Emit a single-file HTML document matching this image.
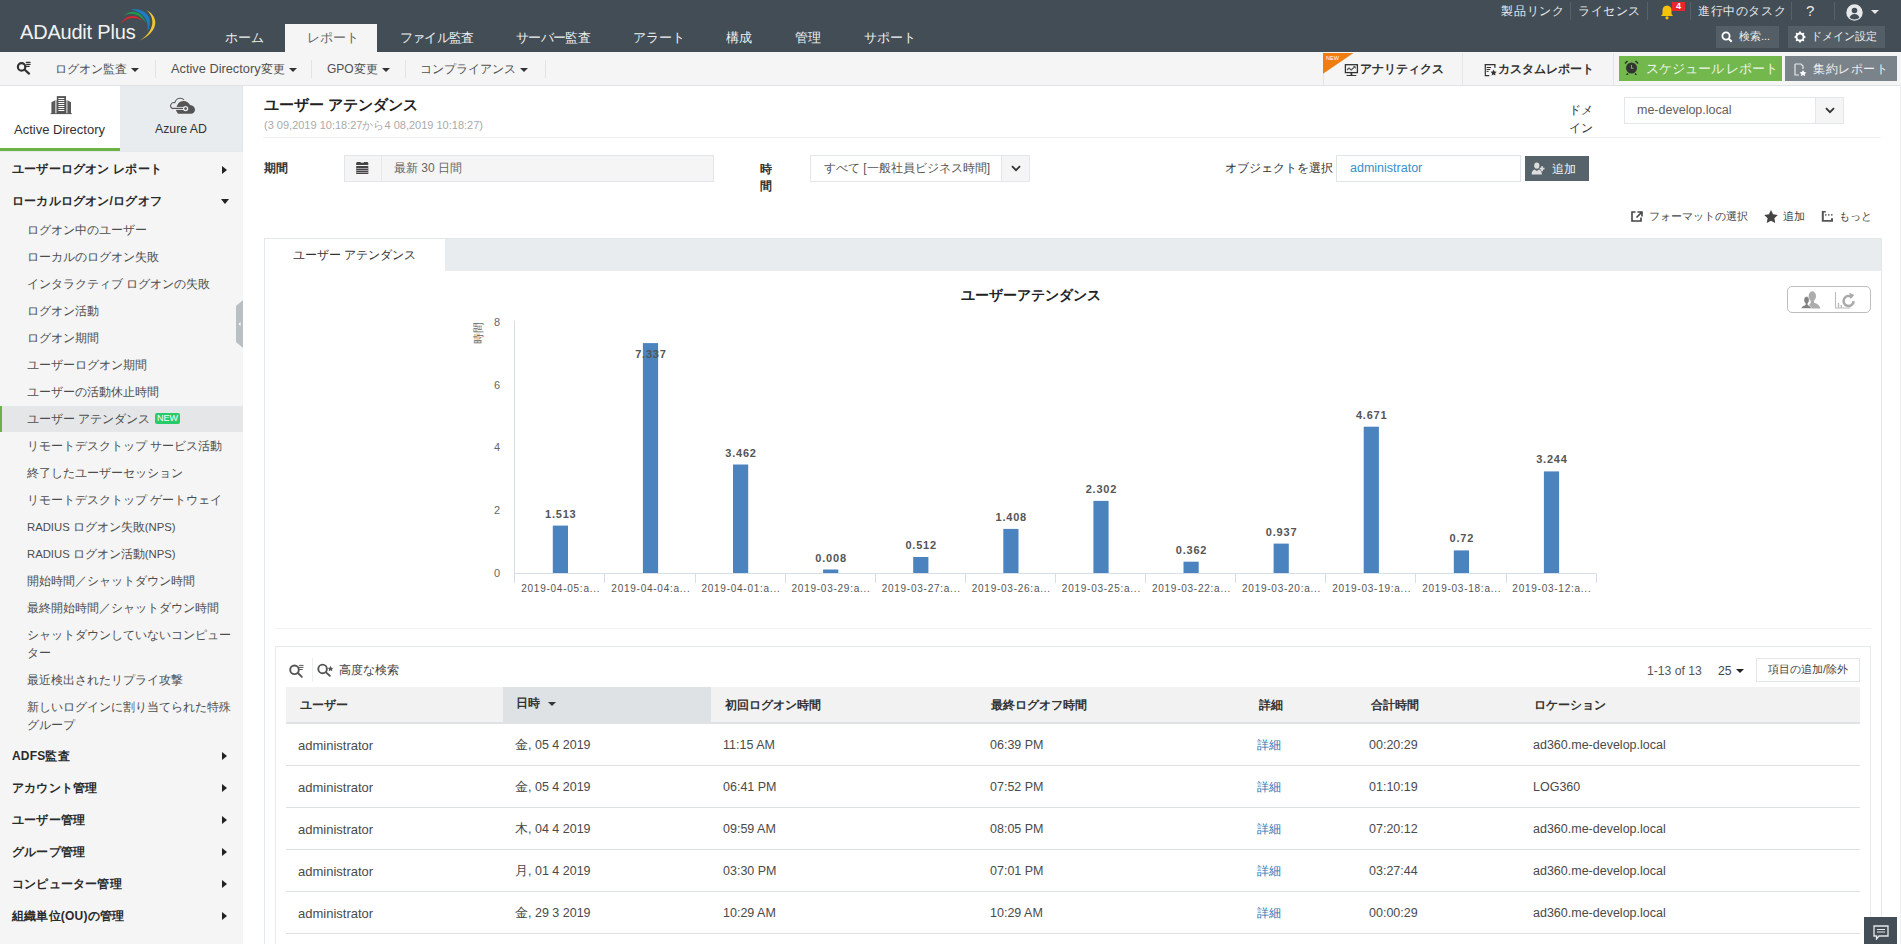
<!DOCTYPE html>
<html><head><meta charset="utf-8">
<style>
*{box-sizing:border-box;margin:0;padding:0}
html,body{width:1901px;height:944px;overflow:hidden;background:#fff;font-family:"Liberation Sans",sans-serif;color:#333}
.a{position:absolute;white-space:nowrap;line-height:1}
#top{position:absolute;left:0;top:0;width:1901px;height:52px;background:#424d55}
.nav{color:#eef0f1;font-size:12.5px;top:32px}
.tr{color:#e8eaeb;font-size:12px;top:5px}
.sep{position:absolute;width:1px;background:#56616a}
#sub{position:absolute;left:0;top:52px;width:1901px;height:34px;background:#f5f5f5;border-bottom:1px solid #dfe3e5}
.sb{font-size:12px;color:#505050;top:63px}
.caret{display:inline-block;width:0;height:0;border-left:4px solid transparent;border-right:4px solid transparent;border-top:4px solid #333;vertical-align:middle;margin-left:4px}
#side{position:absolute;left:0;top:86px;width:243px;height:858px;background:#f5f5f5}
.si{font-size:12px;color:#4d4d4d;left:27px}
.sh{font-size:12px;color:#2a2a2a;font-weight:bold;left:12px;letter-spacing:0.2px}
.ra{position:absolute;left:222px;width:0;height:0;border-top:4px solid transparent;border-bottom:4px solid transparent;border-left:5px solid #222}
.da{position:absolute;left:221px;width:0;height:0;border-left:4.5px solid transparent;border-right:4.5px solid transparent;border-top:5px solid #222}
</style></head><body>
<div id="top">
  <div class="a" style="left:20px;top:22px;font-size:20px;color:#f2f2f2;letter-spacing:-0.2px">ADAudit Plus</div>
  <svg class="a" style="left:110px;top:0" width="50" height="50" viewBox="110 0 50 50">
    <path d="M146 10C158 15 161 31 139 41C156 31 155 16 146 10Z" fill="#f2c530"/>
    <path d="M131 9.5C144 8 155 16 147.5 32C149.5 19 142 12 131 9.5Z" fill="#1d7dc2"/>
    <path d="M123 16C130 9.5 141 9 146.5 23.5C139 13 130 12 123 16Z" fill="#1f9a4e"/>
    <path d="M120.6 24C125 15 136 13 142.8 21C136 16 126 17 120.6 24Z" fill="#d8272e"/>
  </svg>
  <div class="a nav" style="left:225px">ホーム</div>
  <div class="a" style="left:285px;top:24px;width:92px;height:28px;background:#f5f5f5"></div>
  <div class="a nav" style="left:307px;color:#666">レポート</div>
  <div class="a nav" style="left:400px;letter-spacing:-0.8px">ファイル監査</div>
  <div class="a nav" style="left:516px;letter-spacing:-0.7px">サーバー監査</div>
  <div class="a nav" style="left:633px">アラート</div>
  <div class="a nav" style="left:726px">構成</div>
  <div class="a nav" style="left:795px">管理</div>
  <div class="a nav" style="left:864px">サポート</div>

  <div class="a tr" style="left:1501px;letter-spacing:0.8px">製品リンク</div>
  <div class="sep" style="left:1570px;top:2px;height:18px"></div>
  <div class="a tr" style="left:1578px;letter-spacing:0.6px">ライセンス</div>
  <div class="sep" style="left:1647px;top:2px;height:18px"></div>
  <svg class="a" style="left:1659px;top:4px" width="16" height="16" viewBox="0 0 16 16"><path d="M8 1.5c-3 0-4.5 2.2-4.5 5v3.5L2 12h12l-1.5-2V6.5c0-2.8-1.5-5-4.5-5z" fill="#f4c20d"/><circle cx="8" cy="13.8" r="1.6" fill="#f4c20d"/></svg>
  <div class="a" style="left:1672px;top:2px;width:13px;height:9px;background:#e8262b;color:#fff;font-size:9px;font-weight:bold;text-align:center;line-height:9px">4</div>
  <div class="sep" style="left:1690px;top:2px;height:18px"></div>
  <div class="a tr" style="left:1698px;letter-spacing:0.6px">進行中のタスク</div>
  <div class="sep" style="left:1791px;top:2px;height:18px"></div>
  <div class="a tr" style="left:1806px;top:3px;font-size:15px">?</div>
  <div class="sep" style="left:1834px;top:2px;height:18px"></div>
  <svg class="a" style="left:1846px;top:4px" width="17" height="17" viewBox="0 0 17 17"><circle cx="8.5" cy="8.5" r="8.2" fill="#e6e8e9"/><circle cx="8.5" cy="6.5" r="2.8" fill="#424d55"/><path d="M3.5 13.5c1-2.5 3-3.5 5-3.5s4 1 5 3.5c-1.3 1.3-3 2-5 2s-3.7-.7-5-2z" fill="#424d55"/></svg>
  <div class="a" style="left:1871px;top:10px;width:0;height:0;border-left:4px solid transparent;border-right:4px solid transparent;border-top:4px solid #e6e8e9"></div>

  <div class="a" style="left:1716px;top:26px;width:63px;height:22px;background:#535e66"></div>
  <svg class="a" style="left:1721px;top:31px" width="12" height="12" viewBox="0 0 12 12"><circle cx="5" cy="5" r="3.6" stroke="#fff" stroke-width="1.8" fill="none"/><path d="M7.5 7.5l3.2 3.2" stroke="#fff" stroke-width="2"/></svg>
  <div class="a" style="left:1739px;top:31px;font-size:11px;color:#f0f0f0">検索...</div>
  <div class="a" style="left:1788px;top:26px;width:97px;height:22px;background:#535e66"></div>
  <svg class="a" style="left:1794px;top:31px" width="12" height="12" viewBox="0 0 12 12"><circle cx="6" cy="6" r="3.6" stroke="#fff" stroke-width="2" fill="none"/><path d="M6 .6v2M6 9.4v2M.6 6h2M9.4 6h2M2.2 2.2l1.4 1.4M8.4 8.4l1.4 1.4M2.2 9.8l1.4-1.4M8.4 3.6l1.4-1.4" stroke="#fff" stroke-width="1.8"/></svg>
  <div class="a" style="left:1811px;top:31px;font-size:11px;color:#f0f0f0">ドメイン設定</div>
</div>

<div id="sub">
</div>
<svg class="a" style="left:10px;top:56px" width="30" height="24" viewBox="10 56 30 24"><circle cx="21.6" cy="66.9" r="3.7" stroke="#333" stroke-width="2.2" fill="none"/><path d="M25 70l4 3.6" stroke="#333" stroke-width="2.3" stroke-linecap="round"/><path d="M26.3 62.4h3.8M26.6 64.4h3.5M26.2 66.4h3" stroke="#333" stroke-width="1.1" stroke-linecap="round"/></svg>
<div class="a sb" style="left:55px">ログオン監査<span class="caret"></span></div>
<div class="sep" style="left:155px;top:60px;height:18px;background:#e3e3e3"></div>
<div class="a sb" style="left:171px"><span style="font-size:12.8px">Active Directory</span>変更<span class="caret"></span></div>
<div class="sep" style="left:311px;top:60px;height:18px;background:#e3e3e3"></div>
<div class="a sb" style="left:327px">GPO変更<span class="caret"></span></div>
<div class="sep" style="left:405px;top:60px;height:18px;background:#e3e3e3"></div>
<div class="a sb" style="left:420px">コンプライアンス<span class="caret"></span></div>
<div class="sep" style="left:545px;top:60px;height:18px;background:#e3e3e3"></div>

<div class="sep" style="left:1323px;top:53px;height:32px;background:#e3e6e8"></div>
<svg class="a" style="left:1323px;top:53px" width="31" height="21" viewBox="0 0 31 21"><path d="M0 0H30.5L0 20.8z" fill="#f07d12"/><text x="3" y="7" font-family="Liberation Sans" font-size="5.5" fill="#fff">NEW</text></svg>
<svg class="a" style="left:1344px;top:63px" width="15" height="14" viewBox="0 0 15 14"><rect x="1.4" y="1.7" width="12" height="7.9" stroke="#333" stroke-width="1.3" fill="none"/><path d="M3 7l2-2 2.2 2 3.3-3" stroke="#555" stroke-width="1.2" fill="none"/><path d="M9 3.2h2.6v2.6z" fill="#444"/><rect x="6.6" y="9.6" width="1.7" height="2.4" fill="#333"/><rect x="2.4" y="11.9" width="10" height="1.2" rx=".6" fill="#333"/></svg>
<div class="a" style="left:1360px;top:63px;font-size:12px;font-weight:bold;color:#333">アナリティクス</div>
<div class="sep" style="left:1462px;top:53px;height:32px;background:#e3e6e8"></div>
<svg class="a" style="left:1484px;top:63px" width="14" height="14" viewBox="0 0 14 14"><path d="M0.7 1.6h10.2v3.2" stroke="#333" stroke-width="1.3" fill="none"/><path d="M1.3 1.6v11.1h4" stroke="#333" stroke-width="1.2" fill="none"/><path d="M2.6 4.5h4.4M2.6 6.5h3.6M2.6 8.4h2" stroke="#333" stroke-width="1"/><path d="M9.6 6.6l.95 1.9 2.1.3-1.5 1.5.35 2.1-1.9-1-1.9 1 .35-2.1-1.5-1.5 2.1-.3z" fill="#333"/></svg>
<div class="a" style="left:1498px;top:63px;font-size:12px;font-weight:bold;color:#333">カスタムレポート</div>
<div class="sep" style="left:1613px;top:53px;height:32px;background:#e3e6e8"></div>
<div class="a" style="left:1619px;top:56px;width:163px;height:25px;background:#73b84d"></div>
<svg class="a" style="left:1624px;top:60px" width="15" height="15" viewBox="0 0 15 15"><circle cx="7.5" cy="8" r="5.5" fill="#333"/><path d="M1 3.5l2.5-2.5M14 3.5L11.5 1M4 13.5l-1.5 1.5M11 13.5l1.5 1.5" stroke="#333" stroke-width="1.6"/><path d="M7.5 5v3.2h2" stroke="#73b84d" stroke-width="1.1" fill="none"/></svg>
<div class="a" style="left:1646px;top:62.5px;font-size:12.6px;color:#eef5ea">スケジュール<span style="margin-left:1.5px"></span>レポート</div>
<div class="a" style="left:1785px;top:56px;width:112px;height:25px;background:#7b838a"></div>
<svg class="a" style="left:1794px;top:63px" width="13" height="13" viewBox="0 0 13 13"><path d="M1 1h6l2 2v3" stroke="#e8e8e8" stroke-width="1.2" fill="none"/><path d="M1 1v11h4" stroke="#e8e8e8" stroke-width="1.2" fill="none"/><path d="M9 7l1.1 2.1 2.3.3-1.7 1.6.4 2.2L9 12.1 6.9 13.2l.4-2.2-1.7-1.6 2.3-.3z" fill="#fff"/></svg>
<div class="a" style="left:1813px;top:63px;font-size:12.4px;letter-spacing:0.6px;color:#f0f0f0">集約レポート</div>
<div id="side">
  <div class="a" style="left:0;top:0;width:120px;height:65px;background:#fff"></div>
  <div class="a" style="left:120px;top:0;width:123px;height:65px;background:#e9ecee"></div>
  <div class="a" style="left:0;top:62px;width:120px;height:3px;background:#6ab344"></div>
  <div class="a" style="left:0;top:65px;width:243px;height:1px;background:#e6e9eb"></div>
  <svg class="a" style="left:50px;top:9px" width="23" height="20" viewBox="0 0 23 20">
    <path d="M1.4 19V7.3l3.8-2.1V19zM17.3 5.2l3.7 2.1V19h-3.7z" fill="#5a5a5a"/>
    <path d="M5.2 5.2h1.9V19H5.2zM15.4 5.2h1.9V19h-1.9z" fill="#b0b0b0"/>
    <path d="M6.8 1.1h9.2V19H6.8z" fill="#555"/>
    <path d="M8.4 3.5h5.9M8.4 5.5h5.9M8.4 7.5h5.9M8.4 9.5h5.9M8.4 11.5h5.9M8.4 13.5h5.9M8.4 15.5h5.9" stroke="#fff" stroke-width="1"/>
    <path d="M0.5 18.3h21.5v0.8H0.5z" fill="#555"/>
  </svg>
  <div class="a" style="left:14px;top:37px;font-size:13px;color:#333">Active Directory</div>
  <svg class="a" style="left:169px;top:10px" width="28" height="19" viewBox="0 0 28 19">
    <path d="M4 12.7C1.5 12.2 1 9.5 2.2 8 3 6.8 4.5 6.3 5.8 6.6 6.8 3.2 9.8 1.8 12.2 2.3c1.1.2 2.1.9 2.8 1.7" stroke="#555" stroke-width="1.1" fill="none"/>
    <path d="M9 17.8L7 14.5C7.5 8 10.5 5 14.5 5c3 0 5.5 2 6.5 4 3 .2 5 2.5 5 4.8 0 2.2-1.7 4-4 4z" fill="#555"/>
    <path d="M5 12.4h11" stroke="#e9ecee" stroke-width="3"/>
    <path d="M3.6 12.4h12" stroke="#555" stroke-width="1.2"/>
    <circle cx="16.6" cy="12.6" r="2" stroke="#e9ecee" stroke-width="1.3" fill="#555"/>
  </svg>
  <div class="a" style="left:155px;top:37px;font-size:12.3px;color:#333">Azure AD</div>
</div>
<div class="a sh" style="top:163px">ユーザーログオン レポート</div><div class="ra" style="top:166px"></div>
<div class="a sh" style="top:195px">ローカルログオン/ログオフ</div><div class="da" style="top:199px"></div>
<div class="a" style="left:0;top:406px;width:243px;height:26px;background:#e4e6e8"></div>
<div class="a" style="left:0;top:406px;width:2px;height:26px;background:#6ab344"></div>
<div class="a si" style="top:224px">ログオン中のユーザー</div>
<div class="a si" style="top:251px">ローカルのログオン失敗</div>
<div class="a si" style="top:278px">インタラクティブ ログオンの失敗</div>
<div class="a si" style="top:305px">ログオン活動</div>
<div class="a si" style="top:332px">ログオン期間</div>
<div class="a si" style="top:359px">ユーザーログオン期間</div>
<div class="a si" style="top:386px">ユーザーの活動休止時間</div>
<div class="a si" style="top:413px">ユーザー アテンダンス</div>
<div class="a si" style="top:440px">リモートデスクトップ サービス活動</div>
<div class="a si" style="top:467px">終了したユーザーセッション</div>
<div class="a si" style="top:494px">リモートデスクトップ ゲートウェイ</div>
<div class="a si" style="top:521px"><span style="font-size:11.3px">RADIUS </span>ログオン失敗<span style="font-size:11.3px">(NPS)</span></div>
<div class="a si" style="top:548px"><span style="font-size:11.3px">RADIUS </span>ログオン活動<span style="font-size:11.3px">(NPS)</span></div>
<div class="a si" style="top:575px">開始時間／シャットダウン時間</div>
<div class="a si" style="top:602px">最終開始時間／シャットダウン時間</div>
<div class="a" style="left:155px;top:413px;width:25px;height:11px;background:#26cc69;border-radius:2px;color:#fff;font-size:9px;line-height:11px;text-align:center">NEW</div>
<div class="a si" style="top:629px">シャットダウンしていないコンピュー</div><div class="a si" style="top:647px">ター</div>
<div class="a si" style="top:674px">最近検出されたリプライ攻撃</div>
<div class="a si" style="top:701px">新しいログインに割り当てられた特殊</div><div class="a si" style="top:719px">グループ</div>
<div class="a sh" style="top:750px">ADFS監査</div><div class="ra" style="top:752px"></div>
<div class="a sh" style="top:782px">アカウント管理</div><div class="ra" style="top:784px"></div>
<div class="a sh" style="top:814px">ユーザー管理</div><div class="ra" style="top:816px"></div>
<div class="a sh" style="top:846px">グループ管理</div><div class="ra" style="top:848px"></div>
<div class="a sh" style="top:878px">コンピューター管理</div><div class="ra" style="top:880px"></div>
<div class="a sh" style="top:910px">組織単位(OU)の管理</div><div class="ra" style="top:912px"></div>
<svg class="a" style="left:236px;top:300px" width="7" height="48" viewBox="0 0 7 48"><path d="M7 0V48L0 42V6z" fill="#b9c0c4"/><path d="M4.5 22v4l-2-2z" fill="#fff"/></svg>

<!-- main header -->
<div class="a" style="left:242px;top:86px;width:1px;height:66px;background:#e2e6e8"></div>
<div class="a" style="left:264px;top:97px;font-size:15px;font-weight:bold;color:#222">ユーザー アテンダンス</div>
<div class="a" style="left:264px;top:120px;font-size:11px;color:#aaa;letter-spacing:0px">(3 09,2019 10:18:27から4 08,2019 10:18:27)</div>
<div class="a" style="left:263px;top:137px;width:1618px;height:1px;background:#eef0f1"></div>
<div class="a" style="left:1569px;top:101px;font-size:12px;color:#333;line-height:18px;white-space:normal;width:26px">ドメ<br>イン</div>
<div class="a" style="left:1624px;top:97px;width:220px;height:27px;border:1px solid #e3e7e9;background:#fff"></div>
<div class="a" style="left:1815px;top:98px;width:28px;height:25px;background:#f5f5f5;border-left:1px solid #e3e7e9"></div>
<svg class="a" style="left:1825px;top:107px" width="10" height="7" viewBox="0 0 10 7"><path d="M1 1.2l4 4 4-4" stroke="#333" stroke-width="1.8" fill="none"/></svg>
<div class="a" style="left:1637px;top:104px;font-size:12.5px;color:#606060">me-develop.local</div>

<div class="a" style="left:264px;top:162px;font-size:12px;font-weight:bold;color:#333">期間</div>
<div class="a" style="left:344px;top:155px;width:370px;height:27px;background:#f5f5f5;border:1px solid #e2e6e8"></div>
<div class="a" style="left:381px;top:156px;width:1px;height:25px;background:#e6e9ea"></div>
<svg class="a" style="left:356px;top:161px" width="13" height="14" viewBox="0 0 13 14"><path d="M0.2 4V2.3C0.2 1.5.8.9 1.6.9h2.6l1 .9h2.2l1-.9h2.6c.8 0 1.3.6 1.3 1.4V4z" fill="#444"/><rect x="0.2" y="5" width="12.1" height="8" fill="#444"/><path d="M0.2 7.5h12.1M0.2 9.5h12.1M0.2 11.5h12.1" stroke="#b9b4bd" stroke-width="0.8"/></svg>
<div class="a" style="left:394px;top:162px;font-size:12px;color:#666">最新 30 日間</div>

<div class="a" style="left:760px;top:161px;font-size:12px;font-weight:bold;color:#333;line-height:17px;white-space:normal;width:14px">時<br>間</div>
<div class="a" style="left:810px;top:155px;width:220px;height:27px;border:1px solid #e3e7e9;background:#fff"></div>
<div class="a" style="left:1001px;top:156px;width:28px;height:25px;background:#f5f5f5;border-left:1px solid #e3e7e9"></div>
<svg class="a" style="left:1011px;top:165px" width="10" height="7" viewBox="0 0 10 7"><path d="M1 1.2l4 4 4-4" stroke="#333" stroke-width="1.8" fill="none"/></svg>
<div class="a" style="left:824px;top:162px;font-size:12px;color:#555">すべて [一般社員ビジネス時間]</div>

<div class="a" style="left:1225px;top:162px;font-size:12px;color:#333">オブジェクトを選択</div>
<div class="a" style="left:1336px;top:155px;width:185px;height:27px;border:1px solid #dfe5e8;background:#fff"></div>
<div class="a" style="left:1350px;top:162px;font-size:12.5px;color:#3a8fc8">administrator</div>
<div class="a" style="left:1525px;top:156px;width:64px;height:25px;background:#56636b"></div>
<svg class="a" style="left:1531px;top:162px" width="16" height="14" viewBox="0 0 16 14"><ellipse cx="5.8" cy="3.6" rx="2.6" ry="3.2" fill="#ddd"/><path d="M0.6 12.5c0-3.2 1.8-4.8 3-5l2.2 1.6 2.2-1.6c1.2.2 3 1.8 3 5z" fill="#ddd"/><path d="M8.7 6.7h4.8M11.1 4.3v5" stroke="#ddd" stroke-width="1.8"/></svg>
<div class="a" style="left:1552px;top:163px;font-size:12px;color:#f4f4f4">追加</div>

<svg class="a" style="left:1631px;top:211px" width="12" height="11" viewBox="0 0 12 11"><path d="M4.5 1H1v9h9V6.5" stroke="#444" stroke-width="1.6" fill="none"/><path d="M6.5 1H11v4.5M11 1L5.5 6.5" stroke="#444" stroke-width="1.6" fill="none"/></svg>
<div class="a" style="left:1649px;top:211px;font-size:11px;color:#444">フォーマットの選択</div>
<svg class="a" style="left:1764px;top:210px" width="14" height="13" viewBox="0 0 14 13"><path d="M7 0l2.1 4.3 4.7.6-3.4 3.3.8 4.7L7 10.7 2.8 12.9l.8-4.7L.2 4.9l4.7-.6z" fill="#444"/></svg>
<div class="a" style="left:1783px;top:211px;font-size:11px;color:#444">追加</div>
<svg class="a" style="left:1821px;top:211px" width="13" height="11" viewBox="0 0 13 11"><path d="M0.8 0h4v1.5h-2v7.6h7.2V7.2h2v3.6H0.8z" fill="#555"/><circle cx="4.7" cy="3.8" r="0.85" fill="#555"/><circle cx="7.8" cy="3.8" r="0.85" fill="#555"/><circle cx="10.8" cy="3.8" r="0.85" fill="#555"/></svg>
<div class="a" style="left:1839px;top:211px;font-size:11px;color:#444">もっと</div>

<!-- report container -->
<div class="a" style="left:264px;top:238px;width:1618px;height:720px;border:1px solid #e2e7e9;background:#fff"></div>
<div class="a" style="left:445px;top:239px;width:1436px;height:32px;background:#e9ecee"></div>
<div class="a" style="left:293px;top:249px;font-size:12px;color:#333">ユーザー アテンダンス</div>
<svg class="a" style="left:0;top:0" width="1901" height="944" viewBox="0 0 1901 944">
<path d="M514.5 320.5V583" stroke="#d5dee9" stroke-width="1" fill="none"/>
<path d="M514 573.5H1596.5" stroke="#d5dee9" stroke-width="1" fill="none"/>
<path d="M514.5 573.5V583" stroke="#d5dee9" stroke-width="1"/>
<path d="M604.5 573.5V583" stroke="#d5dee9" stroke-width="1"/>
<path d="M695.5 573.5V583" stroke="#d5dee9" stroke-width="1"/>
<path d="M785.5 573.5V583" stroke="#d5dee9" stroke-width="1"/>
<path d="M875.5 573.5V583" stroke="#d5dee9" stroke-width="1"/>
<path d="M965.5 573.5V583" stroke="#d5dee9" stroke-width="1"/>
<path d="M1055.5 573.5V583" stroke="#d5dee9" stroke-width="1"/>
<path d="M1145.5 573.5V583" stroke="#d5dee9" stroke-width="1"/>
<path d="M1235.5 573.5V583" stroke="#d5dee9" stroke-width="1"/>
<path d="M1325.5 573.5V583" stroke="#d5dee9" stroke-width="1"/>
<path d="M1415.5 573.5V583" stroke="#d5dee9" stroke-width="1"/>
<path d="M1506.5 573.5V583" stroke="#d5dee9" stroke-width="1"/>
<path d="M1596.5 573.5V583" stroke="#d5dee9" stroke-width="1"/>
<rect x="552.8" y="525.6" width="15.2" height="47.4" fill="#4b83bf"/>
<rect x="642.9" y="343.1" width="15.2" height="229.9" fill="#4b83bf"/>
<rect x="733.0" y="464.5" width="15.2" height="108.5" fill="#4b83bf"/>
<rect x="823.1" y="569.5" width="15.2" height="3.5" fill="#4b83bf"/>
<rect x="913.2" y="557.0" width="15.2" height="16.0" fill="#4b83bf"/>
<rect x="1003.3" y="528.9" width="15.2" height="44.1" fill="#4b83bf"/>
<rect x="1093.4" y="500.9" width="15.2" height="72.1" fill="#4b83bf"/>
<rect x="1183.5" y="561.7" width="15.2" height="11.3" fill="#4b83bf"/>
<rect x="1273.6" y="543.6" width="15.2" height="29.4" fill="#4b83bf"/>
<rect x="1363.7" y="426.7" width="15.2" height="146.3" fill="#4b83bf"/>
<rect x="1453.8" y="550.4" width="15.2" height="22.6" fill="#4b83bf"/>
<rect x="1543.9" y="471.4" width="15.2" height="101.6" fill="#4b83bf"/>
</svg>
<div class="a" style="left:530.4px;width:60px;text-align:center;top:508.6px;font-size:11px;font-weight:bold;color:#555;letter-spacing:0.8px;text-indent:0.8px">1.513</div>
<div class="a" style="left:620.5px;width:60px;text-align:center;top:349.1px;font-size:11px;font-weight:bold;color:#555;letter-spacing:0.8px;text-indent:0.8px">7.337</div>
<div class="a" style="left:710.6px;width:60px;text-align:center;top:447.5px;font-size:11px;font-weight:bold;color:#555;letter-spacing:0.8px;text-indent:0.8px">3.462</div>
<div class="a" style="left:800.7px;width:60px;text-align:center;top:552.5px;font-size:11px;font-weight:bold;color:#555;letter-spacing:0.8px;text-indent:0.8px">0.008</div>
<div class="a" style="left:890.8px;width:60px;text-align:center;top:540.0px;font-size:11px;font-weight:bold;color:#555;letter-spacing:0.8px;text-indent:0.8px">0.512</div>
<div class="a" style="left:980.9px;width:60px;text-align:center;top:511.9px;font-size:11px;font-weight:bold;color:#555;letter-spacing:0.8px;text-indent:0.8px">1.408</div>
<div class="a" style="left:1071.0px;width:60px;text-align:center;top:483.9px;font-size:11px;font-weight:bold;color:#555;letter-spacing:0.8px;text-indent:0.8px">2.302</div>
<div class="a" style="left:1161.1px;width:60px;text-align:center;top:544.7px;font-size:11px;font-weight:bold;color:#555;letter-spacing:0.8px;text-indent:0.8px">0.362</div>
<div class="a" style="left:1251.2px;width:60px;text-align:center;top:526.6px;font-size:11px;font-weight:bold;color:#555;letter-spacing:0.8px;text-indent:0.8px">0.937</div>
<div class="a" style="left:1341.3px;width:60px;text-align:center;top:409.7px;font-size:11px;font-weight:bold;color:#555;letter-spacing:0.8px;text-indent:0.8px">4.671</div>
<div class="a" style="left:1431.4px;width:60px;text-align:center;top:533.4px;font-size:11px;font-weight:bold;color:#555;letter-spacing:0.8px;text-indent:0.8px">0.72</div>
<div class="a" style="left:1521.5px;width:60px;text-align:center;top:454.4px;font-size:11px;font-weight:bold;color:#555;letter-spacing:0.8px;text-indent:0.8px">3.244</div>
<div class="a" style="left:515.4px;width:90px;text-align:center;top:584px;font-size:10px;color:#555;letter-spacing:0.75px;text-indent:0.75px">2019-04-05:a...</div>
<div class="a" style="left:605.5px;width:90px;text-align:center;top:584px;font-size:10px;color:#555;letter-spacing:0.75px;text-indent:0.75px">2019-04-04:a...</div>
<div class="a" style="left:695.6px;width:90px;text-align:center;top:584px;font-size:10px;color:#555;letter-spacing:0.75px;text-indent:0.75px">2019-04-01:a...</div>
<div class="a" style="left:785.7px;width:90px;text-align:center;top:584px;font-size:10px;color:#555;letter-spacing:0.75px;text-indent:0.75px">2019-03-29:a...</div>
<div class="a" style="left:875.8px;width:90px;text-align:center;top:584px;font-size:10px;color:#555;letter-spacing:0.75px;text-indent:0.75px">2019-03-27:a...</div>
<div class="a" style="left:965.9px;width:90px;text-align:center;top:584px;font-size:10px;color:#555;letter-spacing:0.75px;text-indent:0.75px">2019-03-26:a...</div>
<div class="a" style="left:1056.0px;width:90px;text-align:center;top:584px;font-size:10px;color:#555;letter-spacing:0.75px;text-indent:0.75px">2019-03-25:a...</div>
<div class="a" style="left:1146.1px;width:90px;text-align:center;top:584px;font-size:10px;color:#555;letter-spacing:0.75px;text-indent:0.75px">2019-03-22:a...</div>
<div class="a" style="left:1236.2px;width:90px;text-align:center;top:584px;font-size:10px;color:#555;letter-spacing:0.75px;text-indent:0.75px">2019-03-20:a...</div>
<div class="a" style="left:1326.3px;width:90px;text-align:center;top:584px;font-size:10px;color:#555;letter-spacing:0.75px;text-indent:0.75px">2019-03-19:a...</div>
<div class="a" style="left:1416.4px;width:90px;text-align:center;top:584px;font-size:10px;color:#555;letter-spacing:0.75px;text-indent:0.75px">2019-03-18:a...</div>
<div class="a" style="left:1506.5px;width:90px;text-align:center;top:584px;font-size:10px;color:#555;letter-spacing:0.75px;text-indent:0.75px">2019-03-12:a...</div>
<div class="a" style="left:470px;width:30px;text-align:right;top:567.5px;font-size:11px;color:#666">0</div>
<div class="a" style="left:470px;width:30px;text-align:right;top:504.8px;font-size:11px;color:#666">2</div>
<div class="a" style="left:470px;width:30px;text-align:right;top:442.2px;font-size:11px;color:#666">4</div>
<div class="a" style="left:470px;width:30px;text-align:right;top:379.5px;font-size:11px;color:#666">6</div>
<div class="a" style="left:470px;width:30px;text-align:right;top:316.9px;font-size:11px;color:#666">8</div>
<div class="a" style="left:472px;top:322px;width:15px;height:22px;overflow:visible"><div style="transform:rotate(-90deg);transform-origin:0 0;position:absolute;left:0;top:22px;font-size:11px;line-height:12px;color:#666;white-space:nowrap">時間</div></div>
<div class="a" style="left:961px;top:288px;font-size:14px;font-weight:bold;color:#222">ユーザーアテンダンス</div>
<div class="a" style="left:1787px;top:286px;width:84px;height:27px;border:1.5px solid #bdbdbd;border-radius:5px;background:#fff"></div>
<svg class="a" style="left:1800px;top:289px" width="22" height="20" viewBox="0 0 22 20"><path d="M8.5 19.5c0-3 .8-4.6 2.2-5.6v-2.2c-1.3-1-2.1-2.6-2.1-4.6 0-2.6 1.6-4.8 3.6-4.8s3.8 2.1 3.8 4.7c0 2-.8 3.6-2 4.6v2.1c3.2.8 5.8 2.6 6.5 5.8z" fill="#acacac"/><path d="M0.8 19.5c.8-2 2.5-3 4.5-3.6v-1.6c-.9-.7-1.4-1.9-1.4-3.2 0-2 1.1-3.5 2.7-3.5s2.7 1.5 2.7 3.5c0 1.3-.5 2.5-1.4 3.2v1.6c1.6.5 2.8 1.4 3.7 3.6z" fill="#808080" stroke="#fff" stroke-width="0.6"/></svg>
<svg class="a" style="left:1834px;top:291px" width="22" height="18" viewBox="0 0 22 18"><path d="M1.5 1v16h15" stroke="#bbb" stroke-width="1.1" fill="none"/><path d="M4.5 17v-5M7.3 17v-3" stroke="#bbb" stroke-width="1.4"/><path d="M18 6.3a5 5 0 1 0 1.6 3.8" stroke="#aaa" stroke-width="2.5" fill="none"/><path d="M15.3 1.8l5 2.3-3.8 3.8z" fill="#aaa"/></svg>
<div class="a" style="left:275px;top:628px;width:1596px;height:1px;background:#f0f2f3"></div>
<div class="a" style="left:275px;top:646px;width:1596px;height:320px;border:1px solid #e6eaec;background:#fff"></div>
<svg class="a" style="left:284px;top:658px" width="22" height="24" viewBox="284 658 22 24"><circle cx="294.5" cy="669.8" r="4.3" stroke="#555" stroke-width="1.9" fill="none"/><path d="M298 673l3.8 3.8" stroke="#555" stroke-width="1.9" stroke-linecap="round"/><path d="M299.5 665.4h3.6M299.5 667.4h3.6M299.3 669.5h3" stroke="#555" stroke-width="1" stroke-linecap="round"/></svg>
<div class="a" style="left:312px;top:658px;width:1px;height:24px;background:#eceff0"></div>
<svg class="a" style="left:314px;top:658px" width="22" height="24" viewBox="314 658 22 24"><circle cx="322.6" cy="668.9" r="4.3" stroke="#555" stroke-width="1.9" fill="none"/><path d="M326 672.4l3.8 3.4" stroke="#555" stroke-width="1.9" stroke-linecap="round"/><path d="M330.5 665.8l.9 1.9 2 .2-1.5 1.4.4 2-1.8-1-1.8 1 .4-2-1.5-1.4 2-.2z" fill="#555"/></svg>
<div class="a" style="left:339px;top:664px;font-size:12px;color:#444">高度な検索</div>
<div class="a" style="left:1647px;top:665px;font-size:12.2px;color:#555">1-13 of 13</div>
<div class="a" style="left:1718px;top:665px;font-size:12.2px;color:#444">25</div>
<div class="a" style="left:1736px;top:669px;width:0;height:0;border-left:4px solid transparent;border-right:4px solid transparent;border-top:4px solid #222"></div>
<div class="a" style="left:1756px;top:658px;width:104px;height:24px;border:1px solid #e2e6e8;background:#fff"></div>
<div class="a" style="left:1768px;top:664px;font-size:11px;color:#444">項目の追加/除外</div>
<div class="a" style="left:286px;top:687px;width:1574px;height:37px;background:#f2f2f2;border-bottom:2px solid #dfe3e5"></div>
<div class="a" style="left:503px;top:687px;width:208px;height:35px;background:#dfe2e4"></div>
<div class="a" style="left:299.5px;top:699px;font-size:12px;font-weight:bold;color:#333">ユーザー</div>
<div class="a" style="left:516px;top:697px;font-size:12px;font-weight:bold;color:#333">日時</div>
<div class="a" style="left:724.5px;top:699px;font-size:12px;font-weight:bold;color:#333">初回ログオン時間</div>
<div class="a" style="left:991px;top:699px;font-size:12px;font-weight:bold;color:#333">最終ログオフ時間</div>
<div class="a" style="left:1258.5px;top:699px;font-size:12px;font-weight:bold;color:#333">詳細</div>
<div class="a" style="left:1370.5px;top:699px;font-size:12px;font-weight:bold;color:#333">合計時間</div>
<div class="a" style="left:1534px;top:699px;font-size:12px;font-weight:bold;color:#333">ロケーション</div>
<div class="a" style="left:548px;top:702px;width:0;height:0;border-left:4.5px solid transparent;border-right:4.5px solid transparent;border-top:4.5px solid #333"></div>
<div class="a" style="left:298px;top:739px;font-size:13px;color:#4a4a4a">administrator</div>
<div class="a" style="left:515px;top:739px;font-size:12.5px;color:#4a4a4a">金, 05 4 2019</div>
<div class="a" style="left:723px;top:739px;font-size:12.5px;color:#4a4a4a">11:15 AM</div>
<div class="a" style="left:990px;top:739px;font-size:12.5px;color:#4a4a4a">06:39 PM</div>
<div class="a" style="left:1257px;top:739px;font-size:12px;color:#2a78b8">詳細</div>
<div class="a" style="left:1369px;top:739px;font-size:12.5px;color:#4a4a4a">00:20:29</div>
<div class="a" style="left:1533px;top:739px;font-size:12.5px;color:#4a4a4a">ad360.me-develop.local</div>
<div class="a" style="left:286px;top:765px;width:1574px;height:1px;background:#dde1e3"></div>
<div class="a" style="left:298px;top:781px;font-size:13px;color:#4a4a4a">administrator</div>
<div class="a" style="left:515px;top:781px;font-size:12.5px;color:#4a4a4a">金, 05 4 2019</div>
<div class="a" style="left:723px;top:781px;font-size:12.5px;color:#4a4a4a">06:41 PM</div>
<div class="a" style="left:990px;top:781px;font-size:12.5px;color:#4a4a4a">07:52 PM</div>
<div class="a" style="left:1257px;top:781px;font-size:12px;color:#2a78b8">詳細</div>
<div class="a" style="left:1369px;top:781px;font-size:12.5px;color:#4a4a4a">01:10:19</div>
<div class="a" style="left:1533px;top:781px;font-size:12.5px;color:#4a4a4a">LOG360</div>
<div class="a" style="left:286px;top:807px;width:1574px;height:1px;background:#dde1e3"></div>
<div class="a" style="left:298px;top:823px;font-size:13px;color:#4a4a4a">administrator</div>
<div class="a" style="left:515px;top:823px;font-size:12.5px;color:#4a4a4a">木, 04 4 2019</div>
<div class="a" style="left:723px;top:823px;font-size:12.5px;color:#4a4a4a">09:59 AM</div>
<div class="a" style="left:990px;top:823px;font-size:12.5px;color:#4a4a4a">08:05 PM</div>
<div class="a" style="left:1257px;top:823px;font-size:12px;color:#2a78b8">詳細</div>
<div class="a" style="left:1369px;top:823px;font-size:12.5px;color:#4a4a4a">07:20:12</div>
<div class="a" style="left:1533px;top:823px;font-size:12.5px;color:#4a4a4a">ad360.me-develop.local</div>
<div class="a" style="left:286px;top:849px;width:1574px;height:1px;background:#dde1e3"></div>
<div class="a" style="left:298px;top:865px;font-size:13px;color:#4a4a4a">administrator</div>
<div class="a" style="left:515px;top:865px;font-size:12.5px;color:#4a4a4a">月, 01 4 2019</div>
<div class="a" style="left:723px;top:865px;font-size:12.5px;color:#4a4a4a">03:30 PM</div>
<div class="a" style="left:990px;top:865px;font-size:12.5px;color:#4a4a4a">07:01 PM</div>
<div class="a" style="left:1257px;top:865px;font-size:12px;color:#2a78b8">詳細</div>
<div class="a" style="left:1369px;top:865px;font-size:12.5px;color:#4a4a4a">03:27:44</div>
<div class="a" style="left:1533px;top:865px;font-size:12.5px;color:#4a4a4a">ad360.me-develop.local</div>
<div class="a" style="left:286px;top:891px;width:1574px;height:1px;background:#dde1e3"></div>
<div class="a" style="left:298px;top:907px;font-size:13px;color:#4a4a4a">administrator</div>
<div class="a" style="left:515px;top:907px;font-size:12.5px;color:#4a4a4a">金, 29 3 2019</div>
<div class="a" style="left:723px;top:907px;font-size:12.5px;color:#4a4a4a">10:29 AM</div>
<div class="a" style="left:990px;top:907px;font-size:12.5px;color:#4a4a4a">10:29 AM</div>
<div class="a" style="left:1257px;top:907px;font-size:12px;color:#2a78b8">詳細</div>
<div class="a" style="left:1369px;top:907px;font-size:12.5px;color:#4a4a4a">00:00:29</div>
<div class="a" style="left:1533px;top:907px;font-size:12.5px;color:#4a4a4a">ad360.me-develop.local</div>
<div class="a" style="left:286px;top:933px;width:1574px;height:1px;background:#dde1e3"></div>
<div class="a" style="left:1864px;top:917px;width:33px;height:27px;background:#434e56"></div>
<svg class="a" style="left:1873px;top:925px" width="16" height="15" viewBox="0 0 16 15"><path d="M1 1h14v10H6l-2.5 3v-3H1z" stroke="#e8e8e8" stroke-width="1.3" fill="none"/><path d="M4 4.5h8M4 7h8" stroke="#e8e8e8" stroke-width="1.2"/></svg>
<div class="a" style="left:1900px;top:86px;width:1px;height:858px;background:#eceff0"></div>

</body></html>
